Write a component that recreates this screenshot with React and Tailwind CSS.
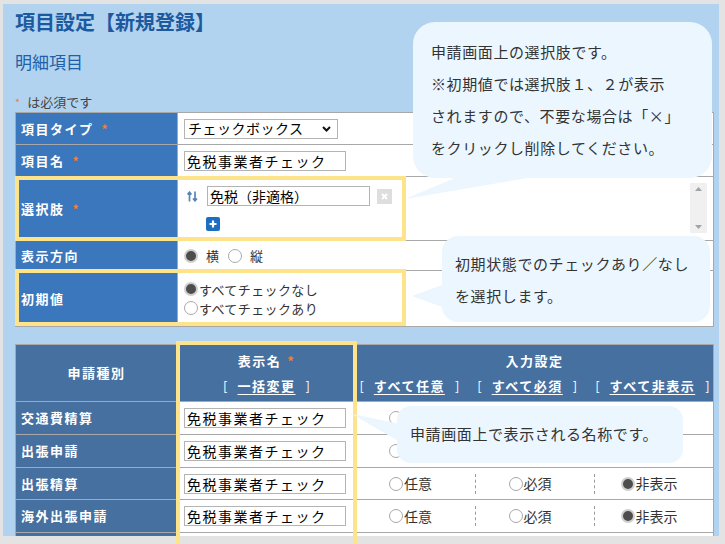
const Star = () => <span className="text-[#f0803c] font-bold text-[12px] ml-[8px]">*</span>

const Radio = ({ on }) =>
  on ? (
    <span className="inline-block w-[14px] h-[14px] rounded-full bg-[#4d4d4d] border-[2px] border-[#cfcfcf] shrink-0" />
  ) : (
    <span className="inline-block w-[14px] h-[14px] rounded-full bg-white border border-[#a9a9a9] shrink-0" />
  )

const TextBox = ({ value, w = 'w-[162px]' }) => (
  <div className={`${w} h-[20px] border border-[#b4b4b4] bg-white pl-[2px] text-[14px] leading-[18px] tracking-[1.5px] text-black whitespace-nowrap overflow-hidden`}>
    {value}
  </div>
)

const Label1 = ({ children, star }) => (
  <div className="bg-[#3a77bd] flex items-center pl-[5px] text-white font-bold text-[13px] tracking-[1.5px]">
    {children}
    {star && <Star />}
  </div>
)

const Row1 = ({ h, label, star, children }) => (
  <div className={`grid grid-cols-[161px_1fr] border-b border-[#a8a8a8] ${h}`}>
    <Label1 star={star}>{label}</Label1>
    <div className="border-l border-[#a8a8a8] bg-white">{children}</div>
  </div>
)

const InputCell = ({ choice }) => (
  <div className="h-full flex items-center text-[14px] text-[#333]">
    {['任意', '必須', '非表示'].map((t, i) => (
      <div key={t} className="flex-1 h-full flex items-center">
        {i > 0 && <span className="h-[20px] border-l border-dashed border-[#9a9a9a]" />}
        <div className="flex-1 flex items-center justify-center pr-[10px]">
          <Radio on={choice === i} />
          <span className="ml-[1px]">{t}</span>
        </div>
      </div>
    ))}
  </div>
)

const Row2 = ({ h, label }) => (
  <div className={`grid grid-cols-[161px_178px_1fr] border-b border-[#a8a8a8] ${h}`}>
    <div className="bg-[#46709f] flex items-center pl-[5px] text-white font-bold text-[13px] tracking-[1.5px]">{label}</div>
    <div className="bg-white border-l border-[#a8a8a8] flex items-center pl-[6px]">
      {label && <TextBox value="免税事業者チェック" />}
    </div>
    <div className="bg-white border-l border-[#a8a8a8]">
      {label && <InputCell choice={2} />}
    </div>
  </div>
)

const Link = ({ children }) => (
  <span className="whitespace-nowrap">
    [<span className="mx-[10px] underline underline-offset-[3px] font-bold tracking-[1.5px]">{children}</span>]
  </span>
)

const Bubble = ({ className, children }) => (
  <div className={`absolute bg-[#ebf6fe] text-[#333] text-[15px] tracking-[0.6px] ${className}`}>{children}</div>
)

export default function App() {
  return (
    <div className="relative w-[725px] h-[544px] overflow-hidden bg-[#e3e3e3] pt-[4px] pl-[3px] font-['Noto_Sans_CJK_JP',sans-serif]">
      <div className="w-[716px] h-[532px] overflow-hidden bg-[#b2d3ef] pl-[12px]">
        <div className="h-[36px] flex items-center text-[20px] font-bold text-[#1c5aa0]">項目設定【新規登録】</div>
        <div className="h-[44px] flex items-center text-[17px] text-[#2060a8]">明細項目</div>
        <div className="h-[28px] pt-[8px] flex items-center text-[13px] text-[#444]">
          <span className="text-[#f0803c] text-[11px] mr-[7px]">*</span>は必須です
        </div>

        <div className="w-[699px] border-t border-l border-r border-[#a8a8a8]">
          <Row1 h="h-[32px]" label="項目タイプ" star>
            <div className="h-full flex items-center pl-[6px]">
              <div className="w-[154px] h-[20px] border border-[#b4b4b4] bg-white flex items-center justify-between pl-[3px] pr-[6px] text-[14px] tracking-[0.5px] text-black">
                チェックボックス
                <svg width="9" height="6" viewBox="0 0 9 6">
                  <path d="M1 1L4.5 4.5L8 1" stroke="#111" strokeWidth="2" fill="none" />
                </svg>
              </div>
            </div>
          </Row1>
          <Row1 h="h-[32px]" label="項目名" star>
            <div className="h-full flex items-center pl-[6px]">
              <TextBox value="免税事業者チェック" />
            </div>
          </Row1>
          <Row1 h="h-[64px]" label="選択肢" star>
            <div className="h-full flex items-start">
              <div className="pt-[9px] pl-[9px]">
                <div className="flex items-center">
                  <svg width="11" height="11" viewBox="0 0 11 11">
                    <path d="M2.5 10.5V1.5M0.5 3.5L2.5 1.2L4.5 3.5M8 0.5V9.5M6 7.5L8 9.8L10 7.5" stroke="#5a86b6" strokeWidth="1.7" fill="none" />
                  </svg>
                  <div className="ml-[9px] w-[163px] h-[20px] border border-[#b4b4b4] bg-white pl-[2px] text-[14px] leading-[18px] text-black">
                    免税（非適格）
                  </div>
                  <div className="ml-[7px] w-[15px] h-[15px] bg-[#dedede] flex items-center justify-center">
                    <svg width="7" height="7" viewBox="0 0 7 7">
                      <path d="M1 1L6 6M6 1L1 6" stroke="#fff" strokeWidth="2" />
                    </svg>
                  </div>
                </div>
                <div className="mt-[11px] ml-[19px] w-[14px] h-[14px] rounded-[2px] bg-[#1d6dc1] flex items-center justify-center">
                  <svg width="8" height="8" viewBox="0 0 8 8">
                    <path d="M4 0.5V7.5M0.5 4H7.5" stroke="#fff" strokeWidth="2.2" />
                  </svg>
                </div>
              </div>
              <div className="ml-auto mr-[6px] mt-[6px] w-[17px] h-[50px] bg-[#f0f0f0] flex flex-col items-center justify-between py-[4px]">
                <svg width="7" height="4" viewBox="0 0 7 4"><path d="M0 4L3.5 0L7 4Z" fill="#a3a3a3" /></svg>
                <svg width="7" height="4" viewBox="0 0 7 4"><path d="M0 0L3.5 4L7 0Z" fill="#a3a3a3" /></svg>
              </div>
            </div>
          </Row1>
          <Row1 h="h-[30px]" label="表示方向">
            <div className="h-full flex items-center pl-[6px] text-[13px] text-[#333]">
              <Radio on />
              <span className="ml-[8px]">横</span>
              <span className="ml-[9px] flex"><Radio /></span>
              <span className="ml-[8px]">縦</span>
            </div>
          </Row1>
          <Row1 h="h-[56px]" label="初期値">
            <div className="h-full flex flex-col justify-center pl-[6px] text-[13px] text-[#333] leading-[19px] tracking-[0.4px]">
              <div className="flex items-center"><Radio on /><span className="ml-[1px]">すべてチェックなし</span></div>
              <div className="flex items-center"><Radio /><span className="ml-[1px]">すべてチェックあり</span></div>
            </div>
          </Row1>
        </div>

        <div className="mt-[17px] w-[699px] border-t border-l border-r border-[#a8a8a8]">
          <div className="grid grid-cols-[161px_178px_1fr] h-[57px] border-b border-[#a8a8a8] bg-[#46709f] text-white text-[13px]">
            <div className="flex items-center justify-center font-bold tracking-[1.5px]">申請種別</div>
            <div className="border-l border-[#6f8db3] flex flex-col items-center justify-center gap-[5px]">
              <div className="font-bold tracking-[1.5px]">表示名<span className="text-[#f0803c] ml-[6px]">*</span></div>
              <Link>一括変更</Link>
            </div>
            <div className="border-l border-[#6f8db3] flex flex-col items-center justify-center gap-[5px]">
              <div className="font-bold tracking-[1.5px]">入力設定</div>
              <div className="flex gap-[18px]">
                <Link>すべて任意</Link>
                <Link>すべて必須</Link>
                <Link>すべて非表示</Link>
              </div>
            </div>
          </div>
          <Row2 h="h-[33px]" label="交通費精算" />
          <Row2 h="h-[33px]" label="出張申請" />
          <Row2 h="h-[32px]" label="出張精算" />
          <Row2 h="h-[33px]" label="海外出張申請" />
          <Row2 h="h-[33px]" label="" />
        </div>
      </div>

      {/* annotation frames */}
      <div className="absolute left-[15px] top-[176px] w-[391px] h-[65px] border-[4px] border-[#fde48b]" />
      <div className="absolute left-[15px] top-[269px] w-[391px] h-[57px] border-[4px] border-[#fde48b]" />
      <div className="absolute left-[176px] top-[341px] w-[181px] h-[210px] border-[4px] border-[#fde48b]" />

      {/* callouts */}
      <svg className="absolute left-0 top-0 pointer-events-none" width="725" height="544">
        <polygon points="405,199 462,175 545,175" fill="#ebf6fe" />
        <polygon points="412,296 445,284 445,308" fill="#ebf6fe" />
        <polygon points="352,414 400,424 400,442" fill="#ebf6fe" />
      </svg>
      <Bubble className="left-[413px] top-[22px] w-[299px] h-[156px] rounded-[22px] pl-[18px] pt-[14px] leading-[32px]">
        <div>申請画面上の選択肢です。</div>
        <div>※初期値では選択肢１、２が表示</div>
        <div>されますので、不要な場合は「×」</div>
        <div>をクリックし削除してください。</div>
      </Bubble>
      <Bubble className="left-[442px] top-[236px] w-[268px] h-[86px] rounded-[16px] pl-[13px] pt-[12px] leading-[32px]">
        <div>初期状態でのチェックあり／なし</div>
        <div>を選択します。</div>
      </Bubble>
      <Bubble className="left-[397px] top-[406px] w-[286px] h-[57px] rounded-[14px] pl-[13px] flex items-center">
        申請画面上で表示される名称です。
      </Bubble>
    </div>
  )
}
